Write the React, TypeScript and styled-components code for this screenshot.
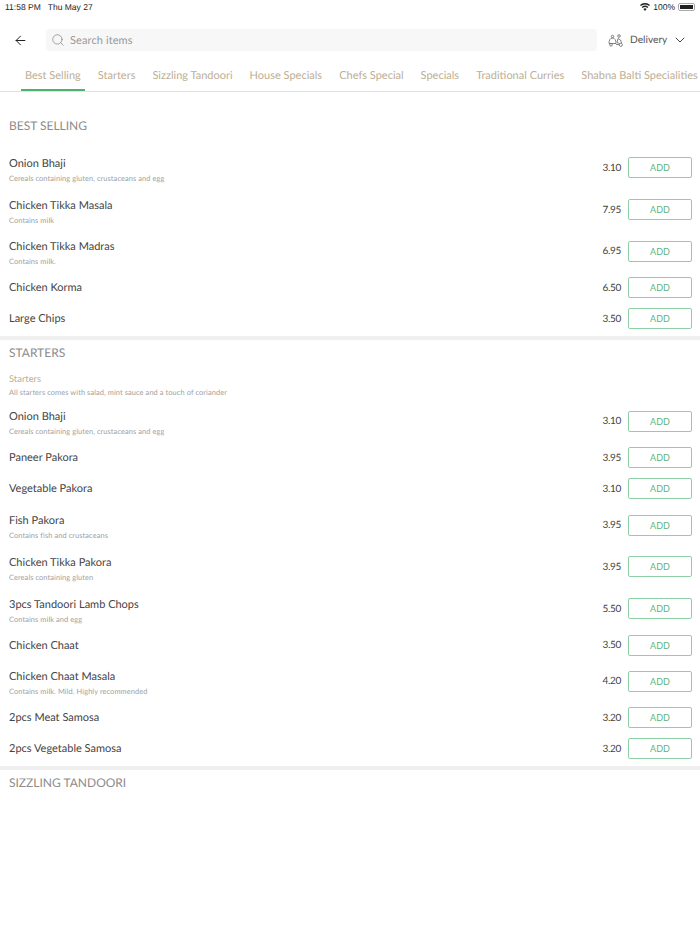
import styled, { createGlobalStyle } from "styled-components";
import { ArrowLeft, ChevronDown, Search } from "lucide-react";

const GlobalStyle = createGlobalStyle`
  html, body {
    margin: 0;
    padding: 0;
    background: #fff;
    font-family: "Lato", "Liberation Sans", sans-serif;
    text-rendering: geometricPrecision;
  }
`;

const Page = styled.div`
  width: 700px;
  height: 934px;
  overflow: hidden;
  background: #fff;
`;

const StatusBar = styled.div`
  display: flex;
  justify-content: space-between;
  align-items: center;
  height: 14px;
  padding: 0 5px;
  font-family: "Liberation Sans", sans-serif;
  font-size: 8.5px;
  color: #222;
`;

const StatusGroup = styled.div`
  display: flex;
  align-items: center;
  gap: 7px;
`;

const StatusRight = styled(StatusGroup)`
  gap: 3px;
`;

const SearchRow = styled.div`
  display: flex;
  align-items: center;
  height: 22px;
  margin-top: 15px;
  padding-left: 13px;
`;

const BackButton = styled.div`
  display: flex;
  width: 33px;
  color: #222;
`;

const SearchBox = styled.div`
  display: flex;
  align-items: center;
  gap: 5px;
  box-sizing: border-box;
  width: 551px;
  height: 22px;
  padding-left: 5px;
  background: #f7f7f7;
  border-radius: 3px;
  color: #999;
  font-size: 11px;
  letter-spacing: 0.1px;
`;

const DeliveryButton = styled.div`
  display: flex;
  align-items: center;
  margin-left: 11px;
  color: #555;
  font-size: 10.2px;
`;

const DeliveryLabel = styled.span`
  margin: 0 5px 0 6px;
`;

const Tabs = styled.div`
  display: flex;
  gap: 9px;
  height: 30px;
  margin-top: 10px;
  padding-left: 21px;
  border-bottom: 1px solid #e2e2e2;
  white-space: nowrap;
`;

const Tab = styled.div<{ $active?: boolean }>`
  height: 28px;
  padding: 0 4px;
  border-bottom: 2px solid ${(p) => (p.$active ? "#4fb06f" : "transparent")};
  color: #bdae95;
  font-size: 11px;
  line-height: 30px;
`;

const Section = styled.section<{ $divider?: boolean }>`
  padding-bottom: 2px;
  border-bottom: ${(p) => (p.$divider ? "4px solid #f0f0f0" : "none")};
`;

const SectionTitle = styled.h2<{ $first?: boolean }>`
  height: ${(p) => (p.$first ? "20px" : "24px")};
  margin: ${(p) => (p.$first ? "24px 0 11px" : "0")};
  padding: 0 9px;
  color: #8c8c8c;
  font-size: 12px;
  font-weight: 400;
  line-height: ${(p) => (p.$first ? "20px" : "25px")};
`;

const Note = styled.div`
  height: 36px;
  padding: 9px 9px 0;
  box-sizing: border-box;
`;

const NoteTitle = styled.div`
  color: #bdae95;
  font-size: 9.4px;
  line-height: 13px;
`;

const Row = styled.div<{ $tall: boolean }>`
  display: flex;
  align-items: center;
  height: ${(p) => (p.$tall ? "41.8px" : "31px")};
  padding: 0 8px 0 9px;
`;

const ItemInfo = styled.div<{ $tall: boolean }>`
  flex: 1;
  padding-top: ${(p) => (p.$tall ? "5px" : "1px")};
`;

const ItemName = styled.div`
  color: #444;
  font-size: 11px;
  line-height: 16px;
`;

const ItemDesc = styled.div`
  margin-top: 1px;
  color: #a0a0a0;
  font-size: 7.4px;
  line-height: 12px;
  letter-spacing: 0.1px;
`;

const Price = styled.div`
  margin-right: 7px;
  color: #444;
  font-size: 10px;
  letter-spacing: -0.3px;
`;

const AddButton = styled.button`
  width: 64px;
  height: 21px;
  padding: 0;
  background: #fff;
  border: 1px solid #8fcfa6;
  border-radius: 2px;
  color: #5db37e;
  font-family: inherit;
  font-size: 9px;
`;

const Battery = styled.div`
  width: 13px;
  height: 4px;
  padding: 1px;
  background: #222;
  border: 1px solid #aaa;
  background-clip: content-box;
  border-radius: 2px;
`;

type Item = { name: string; desc?: string; price: string };

const bestSelling: Item[] = [
  { name: "Onion Bhaji", desc: "Cereals containing gluten, crustaceans and egg", price: "3.10" },
  { name: "Chicken Tikka Masala", desc: "Contains milk", price: "7.95" },
  { name: "Chicken Tikka Madras", desc: "Contains milk.", price: "6.95" },
  { name: "Chicken Korma", price: "6.50" },
  { name: "Large Chips", price: "3.50" },
];

const starters: Item[] = [
  { name: "Onion Bhaji", desc: "Cereals containing gluten, crustaceans and egg", price: "3.10" },
  { name: "Paneer Pakora", price: "3.95" },
  { name: "Vegetable Pakora", price: "3.10" },
  { name: "Fish Pakora", desc: "Contains fish and crustaceans", price: "3.95" },
  { name: "Chicken Tikka Pakora", desc: "Cereals containing gluten", price: "3.95" },
  { name: "3pcs Tandoori Lamb Chops", desc: "Contains milk and egg", price: "5.50" },
  { name: "Chicken Chaat", price: "3.50" },
  { name: "Chicken Chaat Masala", desc: "Contains milk. Mild. Highly recommended", price: "4.20" },
  { name: "2pcs Meat Samosa", price: "3.20" },
  { name: "2pcs Vegetable Samosa", price: "3.20" },
];

const tabs = [
  "Best Selling",
  "Starters",
  "Sizzling Tandoori",
  "House Specials",
  "Chefs Special",
  "Specials",
  "Traditional Curries",
  "Shabna Balti Specialities",
];

const WifiIcon = () => (
  <svg width="10" height="8" viewBox="0 0 10 8" fill="#222">
    <path d="M5 8 3.4 6a2.4 2.4 0 0 1 3.2 0L5 8Z" />
    <path d="M2.6 5 1.7 3.9a5 5 0 0 1 6.6 0L7.4 5a3.6 3.6 0 0 0-4.8 0Z" />
    <path d="M.9 3 0 1.9a7.5 7.5 0 0 1 10 0L9.1 3a6.1 6.1 0 0 0-8.2 0Z" />
  </svg>
);

// two-part delivery glyph, bell shape on the left and rider on the right
const ScooterIcon = () => (
  <svg width="16" height="13" viewBox="0 0 16 13" fill="none" stroke="#666" strokeWidth="0.8">
    <path d="M1 9.5c0-3 1-5.500 3.500-5.500S8 6.500 8 9.500H1Z" />
    <circle cx="4.500" cy="2.500" r="1.200" />
    <circle cx="3" cy="10.800" r="1.300" />
    <circle cx="12.800" cy="10.800" r="1.600" />
    <circle cx="11" cy="2" r="1.300" />
    <path d="M8 10.500h3.300M10 4.500l-1 4 2.500 1M10 4.500l2.500 1.500 1 3" />
  </svg>
);

const MenuRow = ({ item }: { item: Item }) => {
  const tall = Boolean(item.desc);
  return (
    <Row $tall={tall}>
      <ItemInfo $tall={tall}>
        <ItemName>{item.name}</ItemName>
        {item.desc && <ItemDesc>{item.desc}</ItemDesc>}
      </ItemInfo>
      <Price>{item.price}</Price>
      <AddButton>ADD</AddButton>
    </Row>
  );
};

export default function App() {
  return (
    <>
      <GlobalStyle />
      <Page>
        <StatusBar>
          <StatusGroup>
            <span>11:58 PM</span>
            <span>Thu May 27</span>
          </StatusGroup>
          <StatusRight>
            <WifiIcon />
            <span>100%</span>
            <Battery />
          </StatusRight>
        </StatusBar>

        <SearchRow>
          <BackButton>
            <ArrowLeft size={15} strokeWidth={1.6} />
          </BackButton>
          <SearchBox>
            <Search size={14} strokeWidth={1.3} color="#888" />
            Search items
          </SearchBox>
          <DeliveryButton>
            <ScooterIcon />
            <DeliveryLabel>Delivery</DeliveryLabel>
            <ChevronDown size={16} strokeWidth={1.5} color="#444" />
          </DeliveryButton>
        </SearchRow>

        <Tabs>
          {tabs.map((tab, i) => (
            <Tab key={tab} $active={i === 0}>
              {tab}
            </Tab>
          ))}
        </Tabs>

        <Section $divider>
          <SectionTitle $first>BEST SELLING</SectionTitle>
          {bestSelling.map((item) => (
            <MenuRow key={item.name} item={item} />
          ))}
        </Section>

        <Section $divider>
          <SectionTitle>STARTERS</SectionTitle>
          <Note>
            <NoteTitle>Starters</NoteTitle>
            <ItemDesc>All starters comes with salad, mint sauce and a touch of coriander</ItemDesc>
          </Note>
          {starters.map((item) => (
            <MenuRow key={item.name} item={item} />
          ))}
        </Section>

        <SectionTitle>SIZZLING TANDOORI</SectionTitle>
      </Page>
    </>
  );
}
